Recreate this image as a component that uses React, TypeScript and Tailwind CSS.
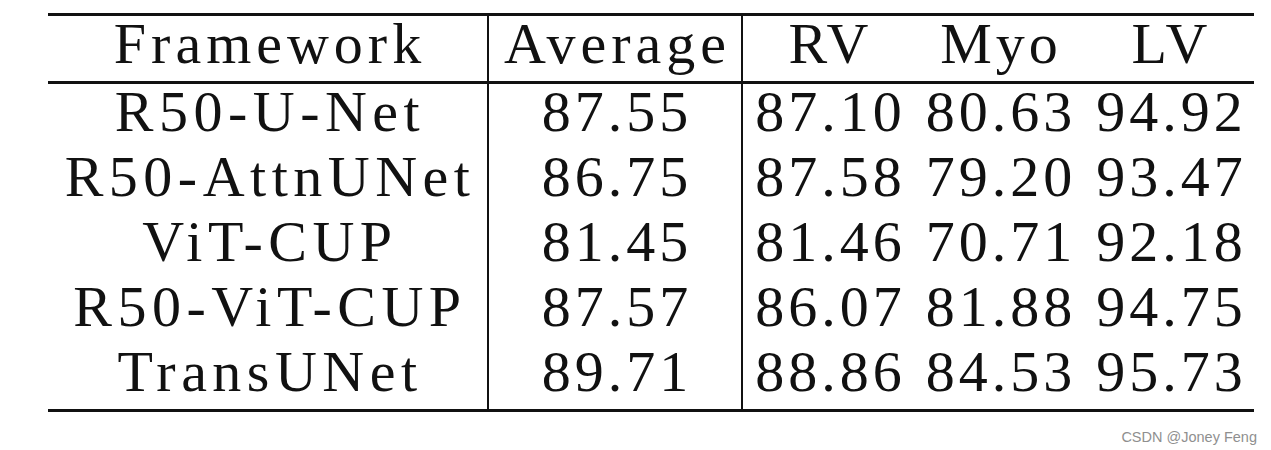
const rows = [
  ["R50-U-Net", "87.55", "87.10", "80.63", "94.92"],
  ["R50-AttnUNet", "86.75", "87.58", "79.20", "93.47"],
  ["ViT-CUP", "81.45", "81.46", "70.71", "92.18"],
  ["R50-ViT-CUP", "87.57", "86.07", "81.88", "94.75"],
  ["TransUNet", "89.71", "88.86", "84.53", "95.73"],
]

const grid = "grid grid-cols-[441px_254px_171px_170px_171px]"
const cell = "h-[65px] leading-[55px] text-center whitespace-nowrap"

function App() {
  return (
    <div className="w-[1271px] h-[450px] bg-white text-[#111] font-['Liberation_Serif',serif] text-[58px]">
      <div className="pt-[13px] pl-[48px]">
        <div className="w-[1206px] border-t-[3px] border-b-[3px] border-[#111]">
          {/* header */}
          <div className={`${grid} border-b-[3px] border-[#111]`}>
            <div className={`${cell} tracking-[5px] pl-[5px] border-r-2 border-[#111]`}>Framework</div>
            <div className={`${cell} tracking-[5px] pl-[5px] border-r-2 border-[#111]`}>Average</div>
            <div className={`${cell} tracking-[4px] pl-[4px]`}>RV</div>
            <div className={`${cell} tracking-[4px] pl-[4px]`}>Myo</div>
            <div className={`${cell} tracking-[4px] pl-[4px]`}>LV</div>
          </div>
          {/* body */}
          {rows.map((r) => (
            <div key={r[0]} className={grid}>
              <div className={`${cell} tracking-[5.5px] pl-[5px] border-r-2 border-[#111]`}>{r[0]}</div>
              <div className={`${cell} tracking-[4px] pl-[4px] border-r-2 border-[#111]`}>{r[1]}</div>
              <div className={`${cell} tracking-[4px] pl-[4px]`}>{r[2]}</div>
              <div className={`${cell} tracking-[4px] pl-[4px]`}>{r[3]}</div>
              <div className={`${cell} tracking-[4px] pl-[4px]`}>{r[4]}</div>
            </div>
          ))}
        </div>
      </div>
      <div className="flex justify-end pr-[14px] pt-[16px] text-[14.5px] leading-[18px] text-[#8f8f8f] font-['Liberation_Sans',sans-serif]">
        CSDN @Joney Feng
      </div>
    </div>
  )
}

export default App
